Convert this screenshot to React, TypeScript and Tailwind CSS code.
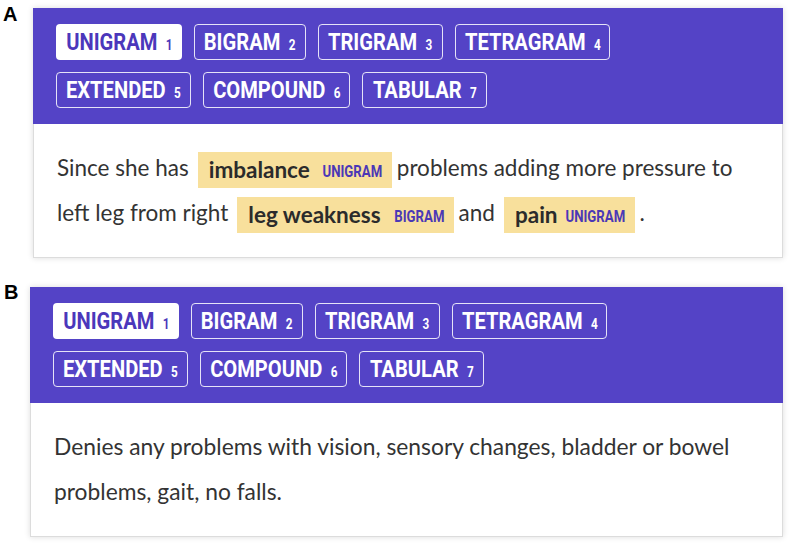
import React from "react";

const tabs: { label: string; n: number; w: string; active?: boolean }[][] = [
  [
    { label: "UNIGRAM", n: 1, w: "w-[126px]", active: true },
    { label: "BIGRAM", n: 2, w: "w-[112px]" },
    { label: "TRIGRAM", n: 3, w: "w-[125px]" },
    { label: "TETRAGRAM", n: 4, w: "w-[155px]" },
  ],
  [
    { label: "EXTENDED", n: 5, w: "w-[135px]" },
    { label: "COMPOUND", n: 6, w: "w-[147px]" },
    { label: "TABULAR", n: 7, w: "w-[125px]" },
  ],
];

function Tab({ label, n, w, active }: { label: string; n: number; w: string; active?: boolean }) {
  return (
    <div
      className={
        "flex h-[36px] items-center justify-center rounded-[4px] " +
        w +
        " " +
        (active
          ? "bg-white text-[#4b37bb]"
          : "border-[1.5px] border-[rgba(255,255,255,0.85)] text-white")
      }
    >
      <span
        className="inline-block scale-x-[0.84] whitespace-nowrap text-[24px] font-bold leading-none"
        style={{ fontFamily: "Roboto, sans-serif" }}
      >
        {label}
        <span className="ml-[10px] text-[14px]">{n}</span>
      </span>
    </div>
  );
}

function Header() {
  return (
    <div className="flex flex-col gap-[12px] bg-[#5443c6] pb-[16px] pl-[23px] pt-[16px]">
      {tabs.map((row, i) => (
        <div key={i} className="flex gap-[12px]">
          {row.map((t) => (
            <Tab key={t.label} {...t} />
          ))}
        </div>
      ))}
    </div>
  );
}

function Hl({ word, tag, tagW, gap }: { word: string; tag: string; tagW: string; gap: string }) {
  return (
    <span className="ml-[9px] mr-[5px] inline-flex h-[36px] items-center bg-[#f8e09c] pl-[11px] pr-[10px] align-middle leading-none">
      <span className="font-bold text-[#2b2b2b]">{word}</span>
      <span className={"inline-flex justify-center " + gap + " " + tagW}>
        <span
          className="inline-block scale-x-[0.8] whitespace-nowrap pt-[3px] text-[16.5px] font-bold text-[#4b38b6]"
          style={{ fontFamily: "Roboto, sans-serif" }}
        >
          {tag}
        </span>
      </span>
    </span>
  );
}

function Panel({ children, left, size }: { children: React.ReactNode; left: string; size: string }) {
  return (
    <div className={"w-[750px] shadow-[0_0_6px_rgba(0,0,0,0.14)] " + left}>
      <Header />
      <div
        className={
          "h-[134px] border-x border-b border-[#dcdcdc] bg-white px-[23px] pt-[21px] leading-[45px] text-[#333333] " +
          size
        }
        style={{ fontFamily: "Lato, sans-serif" }}
      >
        {children}
      </div>
    </div>
  );
}

export default function App() {
  return (
    <div className="h-[547px] w-[794px] bg-white pt-[8px]" style={{ fontFamily: "Lato, sans-serif" }}>
      <div className="flex items-start">
        <div
          className="-mt-[4px] w-[33px] pl-[3px] text-[20px] font-bold leading-none text-black"
          style={{ fontFamily: "'Liberation Sans', Arial, sans-serif" }}
        >
          A
        </div>
        <Panel left="" size="text-[22.5px]">
          Since she has
          <Hl word="imbalance" tag="UNIGRAM" tagW="w-[58px]" gap="ml-[14px]" />
          problems adding more pressure to
          <br />
          left leg from right
          <Hl word="leg weakness" tag="BIGRAM" tagW="w-[48px]" gap="ml-[15px]" />
          and
          <Hl word="pain" tag="UNIGRAM" tagW="w-[58px]" gap="ml-[9px]" />.
        </Panel>
      </div>
      <div className="mt-[29px] flex items-start">
        <div
          className="-mt-[5px] w-[30px] pl-[4px] text-[20px] font-bold leading-none text-black"
          style={{ fontFamily: "'Liberation Sans', Arial, sans-serif" }}
        >
          B
        </div>
        <Panel left="w-[753px]" size="text-[22.8px]">
          Denies any problems with vision, sensory changes, bladder or bowel problems, gait, no falls.
        </Panel>
      </div>
    </div>
  );
}
